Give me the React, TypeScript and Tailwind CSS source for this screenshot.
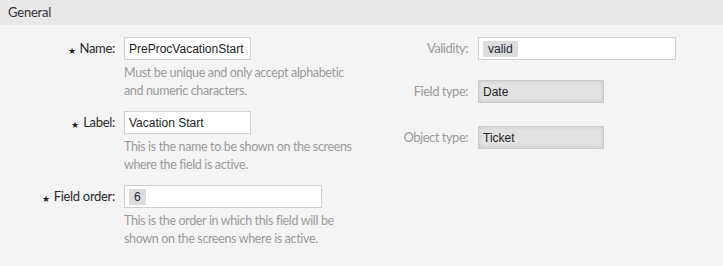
import React from 'react';

const sans = "font-['Lato','Noto_Sans',sans-serif]";
const arial = "font-['Liberation_Sans',Arial,sans-serif]";

const Star = () => <span className="mr-[4px] inline-block translate-y-[2px] text-[9px] text-[#222]">★</span>;

interface LeftRowProps {
  label: string;
  help: string[];
  children: React.ReactNode;
}

const LeftRow: React.FC<LeftRowProps> = ({ label, help, children }) => (
  <div className="grid grid-cols-[115px_1fr] gap-x-[9px]">
    <div className="flex h-[23px] items-center justify-end text-[13px] tracking-[-0.3px] text-[#2a2a2a]">
      <Star />
      {label}
    </div>
    <div>
      {children}
      <div className="mt-[4px] text-[12.5px] leading-[18px] tracking-[-0.35px] text-[#9a9a9a]">
        {help.map((line, i) => (
          <div key={i}>{line}</div>
        ))}
      </div>
    </div>
  </div>
);

const RightRow: React.FC<{ label: string; children: React.ReactNode; className?: string }> = ({ label, children, className }) => (
  <div className={`grid grid-cols-[108px_1fr] gap-x-[10px] ${className ?? ''}`}>
    <div className="flex h-[23px] items-center justify-end text-[13px] tracking-[-0.5px] text-[#9a9a9a]">{label}</div>
    <div>{children}</div>
  </div>
);

const TextInput: React.FC<{ width: string; children: React.ReactNode }> = ({ width, children }) => (
  <div className={`flex h-[23px] items-center border border-[#cfcfcf] bg-white px-[4px] text-[12px] text-[#222] ${arial} ${width}`}>
    {children}
  </div>
);

const Chip: React.FC<{ children: React.ReactNode }> = ({ children }) => (
  <span className="flex h-[16px] items-center bg-[#dcdcdc] px-[5px] text-[12px] text-[#1d2838]">{children}</span>
);

const ReadOnly: React.FC<{ children: React.ReactNode }> = ({ children }) => (
  <div className={`flex h-[23px] w-[126px] items-center border border-[#cacaca] bg-[#e2e2e2] px-[4px] text-[12px] text-[#222] shadow-[inset_0_0_4px_rgba(0,0,0,0.12)] ${arial}`}>
    {children}
  </div>
);

export default function App() {
  return (
    <div className={`h-[266px] w-[723px] bg-[#f4f4f4] ${sans}`}>
      <div className="flex h-[25px] items-center bg-[#e8e8e8] pl-[8px] text-[13px] tracking-[-0.2px] text-[#333]">General</div>
      <div className="flex pt-[12px]">
        <div className="flex w-[360px] flex-col gap-[11px]">
          <LeftRow label="Name:" help={['Must be unique and only accept alphabetic', 'and numeric characters.']}>
            <TextInput width="w-[127px]">PreProcVacationStart</TextInput>
          </LeftRow>
          <LeftRow label="Label:" help={['This is the name to be shown on the screens', 'where the field is active.']}>
            <TextInput width="w-[127px]">Vacation Start</TextInput>
          </LeftRow>
          <LeftRow label="Field order:" help={['This is the order in which this field will be', 'shown on the screens where is active.']}>
            <TextInput width="w-[198px]">
              <Chip>6</Chip>
            </TextInput>
          </LeftRow>
        </div>
        <div className="flex flex-col">
          <RightRow label="Validity:">
            <TextInput width="w-[198px]">
              <Chip>valid</Chip>
            </TextInput>
          </RightRow>
          <RightRow label="Field type:" className="mt-[20px]">
            <ReadOnly>Date</ReadOnly>
          </RightRow>
          <RightRow label="Object type:" className="mt-[23px]">
            <ReadOnly>Ticket</ReadOnly>
          </RightRow>
        </div>
      </div>
    </div>
  );
}
